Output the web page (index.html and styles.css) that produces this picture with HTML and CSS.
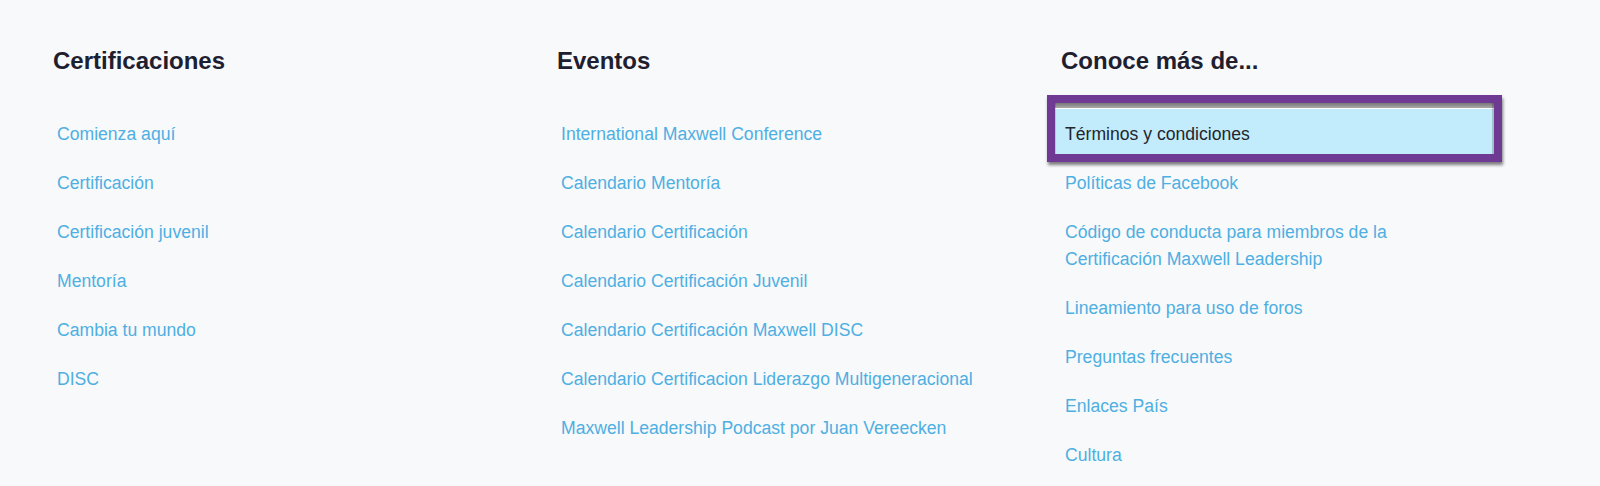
FILE: index.html
```html
<!DOCTYPE html>
<html lang="es">
<head>
<meta charset="utf-8">
<title>Footer</title>
<link rel="stylesheet" href="styles.css">
</head>
<body>
<footer class="footer">
  <section class="col">
    <h3 class="col-title">Certificaciones</h3>
    <ul class="links">
      <li><a href="#">Comienza aquí</a></li>
      <li><a href="#">Certificación</a></li>
      <li><a href="#">Certificación juvenil</a></li>
      <li><a href="#">Mentoría</a></li>
      <li><a href="#">Cambia tu mundo</a></li>
      <li><a href="#">DISC</a></li>
    </ul>
  </section>
  <section class="col">
    <h3 class="col-title">Eventos</h3>
    <ul class="links">
      <li><a href="#">International Maxwell Conference</a></li>
      <li><a href="#">Calendario Mentoría</a></li>
      <li><a href="#">Calendario Certificación</a></li>
      <li><a href="#">Calendario Certificación Juvenil</a></li>
      <li><a href="#">Calendario Certificación Maxwell DISC</a></li>
      <li><a href="#">Calendario Certificacion Liderazgo Multigeneracional</a></li>
      <li><a href="#">Maxwell Leadership Podcast por Juan Vereecken</a></li>
    </ul>
  </section>
  <section class="col">
    <h3 class="col-title">Conoce más de...</h3>
    <ul class="links">
      <li class="is-focused"><a href="#">Términos y condiciones</a></li>
      <li><a href="#">Políticas de Facebook</a></li>
      <li><a href="#">Código de conducta para miembros de la Certificación Maxwell Leadership</a></li>
      <li><a href="#">Lineamiento para uso de foros</a></li>
      <li><a href="#">Preguntas frecuentes</a></li>
      <li><a href="#">Enlaces País</a></li>
      <li><a href="#">Cultura</a></li>
    </ul>
  </section>
</footer>
</body>
</html>
```

FILE: styles.css
```css
html, body {
  margin: 0;
  padding: 0;
  background: #f8f9fb;
}

body {
  font-family: "Liberation Sans", Arial, Helvetica, sans-serif;
  height: 486px;
  overflow: hidden;
}

.footer {
  display: grid;
  grid-template-columns: repeat(3, 504px);
  padding: 47px 0 0 53px;
}

.col-title {
  margin: 0;
  font-size: 24px;
  line-height: 28px;
  font-weight: 700;
  color: #1e2030;
}

.links {
  list-style: none;
  margin: 46px 0 0 0;
  padding: 0 0 0 4px;
  max-width: 418px;
}

.links li {
  position: relative;
  z-index: 0;
  font-size: 17.6px;
  line-height: 26.5px;
  margin-bottom: 22.5px;
}

.links a {
  color: #4eafe2;
  text-decoration: none;
}

.is-focused a {
  color: #23252f;
}

.is-focused::before {
  content: "";
  position: absolute;
  z-index: -1;
  left: -10px;
  top: -18px;
  width: 439px;
  height: 51px;
  background: linear-gradient(to bottom, #777 0, #a9a9a9 5px, #fff 5px, #fff 6px, #c2ecfb 6px);
  box-shadow:
    inset 1px 0 0 rgba(0, 0, 0, 0.12),
    inset -2px 0 0 rgba(0, 0, 0, 0.18),
    0 0 0 8px #6e3a93,
    1px 3px 3px 8px rgba(0, 0, 0, 0.5);
}
```
